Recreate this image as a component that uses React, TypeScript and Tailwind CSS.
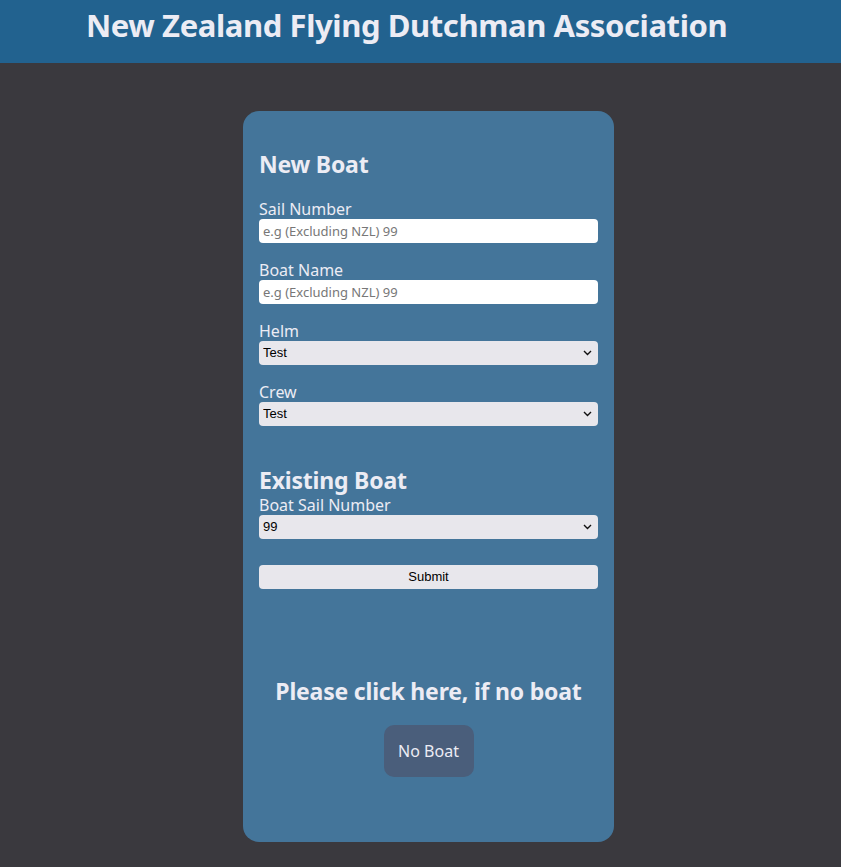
import React from "react";

const Chevron = () => (
  <svg className="pointer-events-none absolute right-[6px] top-[9px]" width="9" height="6" viewBox="0 0 9 6" fill="none">
    <path d="M1 1l3.5 3.5L8 1" stroke="#111" strokeWidth="1.4" />
  </svg>
);

function SelectBox({ value }: { value: string }) {
  return (
    <div className="relative h-6 w-full">
      <select
        defaultValue={value}
        className="block h-6 w-full appearance-none rounded-[4px] bg-[#e8e7ec] pl-[4px] text-[13px] text-black outline-none"
        style={{ fontFamily: "Arial, 'Liberation Sans', sans-serif" }}
      >
        <option>{value}</option>
      </select>
      <Chevron />
    </div>
  );
}

function Label({ children }: { children: React.ReactNode }) {
  return <div className="h-5 text-[16px] leading-5 text-[#ececf4]">{children}</div>;
}

export default function App() {
  return (
    <div
      className="min-h-[867px] w-full bg-[#3a393e]"
      style={{ fontFamily: "'Noto Sans', 'Open Sans', sans-serif" }}
    >
      <header className="flex h-[63px] items-center bg-[#22628f] pb-[12px] pl-[86px]">
        <h1 className="text-[31px] font-bold leading-none tracking-[-0.4px] text-[#ececf4]">
          New Zealand Flying Dutchman Association
        </h1>
      </header>
      <div className="flex justify-center pt-12">
        <div className="ml-4 w-[371px] rounded-2xl bg-[#44759a] px-4 pb-[65px] pt-[39px]">
          <h2 className="h-7 text-[23px] font-bold leading-7 tracking-[-0.2px] text-[#ececf4]">New Boat</h2>
          <div className="mt-[21px]">
            <Label>Sail Number</Label>
            <input
              placeholder="e.g (Excluding NZL) 99"
              className="block h-6 w-full rounded-[4px] bg-white px-[4px] text-[13px] outline-none placeholder:text-[#777]"
            />
          </div>
          <div className="mt-[17px]">
            <Label>Boat Name</Label>
            <input
              placeholder="e.g (Excluding NZL) 99"
              className="block h-6 w-full rounded-[4px] bg-white px-[4px] text-[13px] outline-none placeholder:text-[#777]"
            />
          </div>
          <div className="mt-[17px]">
            <Label>Helm</Label>
            <SelectBox value="Test" />
          </div>
          <div className="mt-[17px]">
            <Label>Crew</Label>
            <SelectBox value="Test" />
          </div>
          <h2 className="mt-10 h-7 text-[23px] font-bold leading-7 tracking-[-0.2px] text-[#ececf4]">Existing Boat</h2>
          <div className="mt-px">
            <Label>Boat Sail Number</Label>
            <SelectBox value="99" />
          </div>
          <button
            className="mt-[26px] block h-6 w-full rounded-[4px] bg-[#e8e7ec] text-[13px] text-black"
            style={{ fontFamily: "Arial, 'Liberation Sans', sans-serif" }}
          >
            Submit
          </button>
          <h2 className="mt-[88px] h-7 text-center text-[23px] font-bold leading-7 tracking-[-0.2px] text-[#ececf4]">
            Please click here, if no boat
          </h2>
          <div className="mt-5 flex justify-center">
            <button className="h-[52px] w-[90px] rounded-[10px] bg-[#4a5e7b] text-[16px] text-[#ececf4]">
              No Boat
            </button>
          </div>
        </div>
      </div>
    </div>
  );
}
